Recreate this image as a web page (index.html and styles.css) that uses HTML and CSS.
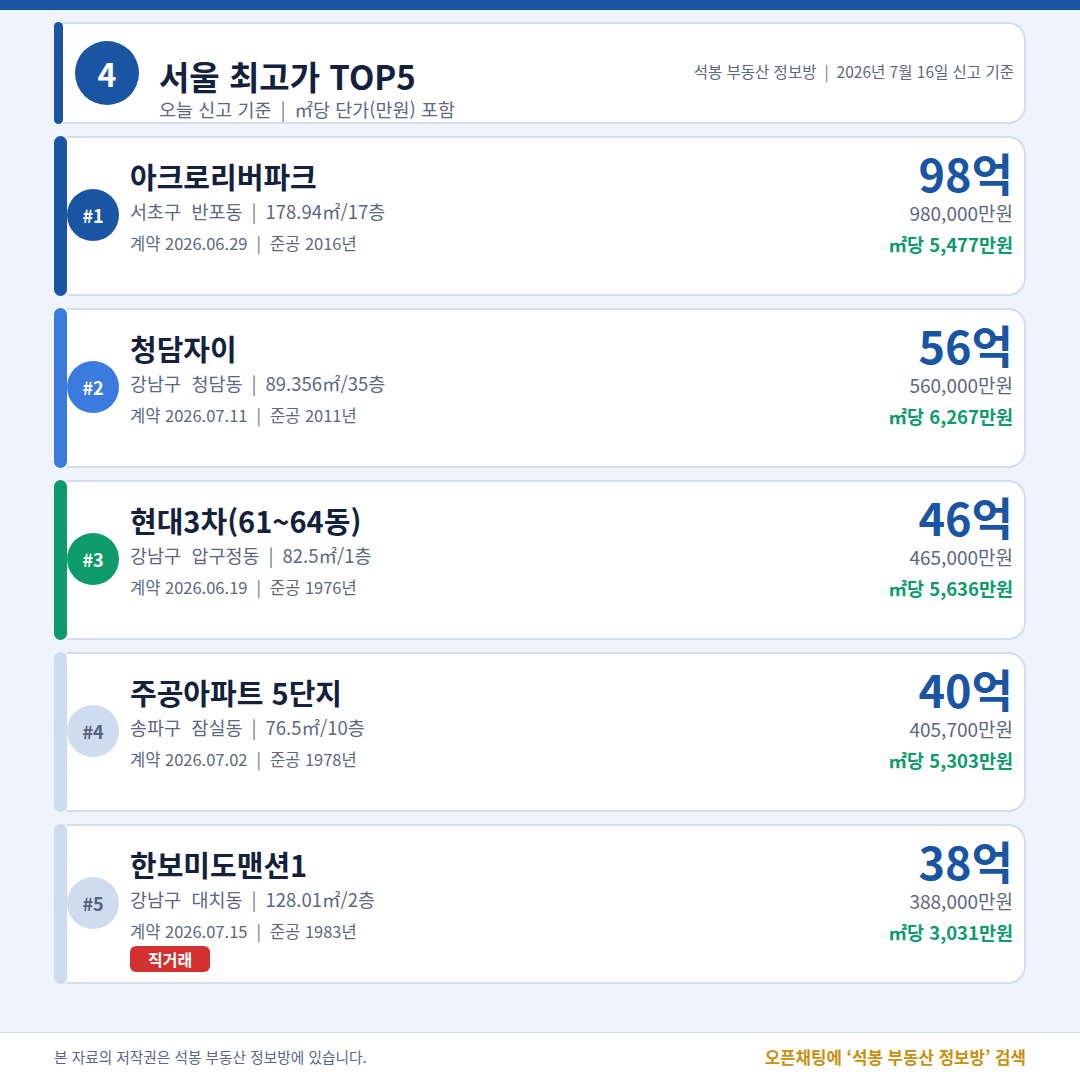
FILE: index.html
```html
<!DOCTYPE html>
<html lang="ko">

<head>
    <meta charset="UTF-8" />
    <meta name="viewport" content="width=device-width, initial-scale=1.0" />
    <title>서울 최고가 TOP5</title>
    <link rel="stylesheet" href="styles.css">
</head>

<body>
    <div class="page">
        <div class="topbar"></div>
        <main>
            <section class="head">
                <div class="bar"></div>
                <div class="head-body">
                    <div class="num">4</div>
                    <div class="head-text">
                        <h1>서울 최고가 TOP5</h1>
                        <p>오늘 신고 기준<span class="sep">|</span>㎡당 단가(만원) 포함</p>
                    </div>
                    <div class="head-info">석봉 부동산 정보방<span class="sep">|</span>2026년 7월 16일 신고 기준</div>
                </div>
            </section>

            <section class="card c1">
                <div class="bar"></div>
                <div class="card-body">
                    <div class="rank">#1</div>
                    <div class="info">
                        <h2>아크로리버파크</h2>
                        <p class="loc">서초구&nbsp; 반포동<span class="sep">|</span>178.94㎡/17층</p>
                        <p class="date">계약 2026.06.29<span class="sep">|</span>준공 2016년</p>
                    </div>
                    <div class="price">
                        <div class="big">98억</div>
                        <div class="won">980,000만원</div>
                        <div class="unit">㎡당 5,477만원</div>
                    </div>
                </div>
            </section>

            <section class="card c2">
                <div class="bar"></div>
                <div class="card-body">
                    <div class="rank">#2</div>
                    <div class="info">
                        <h2>청담자이</h2>
                        <p class="loc">강남구&nbsp; 청담동<span class="sep">|</span>89.356㎡/35층</p>
                        <p class="date">계약 2026.07.11<span class="sep">|</span>준공 2011년</p>
                    </div>
                    <div class="price">
                        <div class="big">56억</div>
                        <div class="won">560,000만원</div>
                        <div class="unit">㎡당 6,267만원</div>
                    </div>
                </div>
            </section>

            <section class="card c3">
                <div class="bar"></div>
                <div class="card-body">
                    <div class="rank">#3</div>
                    <div class="info">
                        <h2>현대3차(61~64동)</h2>
                        <p class="loc">강남구&nbsp; 압구정동<span class="sep">|</span>82.5㎡/1층</p>
                        <p class="date">계약 2026.06.19<span class="sep">|</span>준공 1976년</p>
                    </div>
                    <div class="price">
                        <div class="big">46억</div>
                        <div class="won">465,000만원</div>
                        <div class="unit">㎡당 5,636만원</div>
                    </div>
                </div>
            </section>

            <section class="card c4">
                <div class="bar"></div>
                <div class="card-body">
                    <div class="rank">#4</div>
                    <div class="info">
                        <h2>주공아파트 5단지</h2>
                        <p class="loc">송파구&nbsp; 잠실동<span class="sep">|</span>76.5㎡/10층</p>
                        <p class="date">계약 2026.07.02<span class="sep">|</span>준공 1978년</p>
                    </div>
                    <div class="price">
                        <div class="big">40억</div>
                        <div class="won">405,700만원</div>
                        <div class="unit">㎡당 5,303만원</div>
                    </div>
                </div>
            </section>

            <section class="card c4">
                <div class="bar"></div>
                <div class="card-body">
                    <div class="rank">#5</div>
                    <div class="info">
                        <h2>한보미도맨션1</h2>
                        <p class="loc">강남구&nbsp; 대치동<span class="sep">|</span>128.01㎡/2층</p>
                        <p class="date">계약 2026.07.15<span class="sep">|</span>준공 1983년</p>
                        <span class="badge">직거래</span>
                    </div>
                    <div class="price">
                        <div class="big">38억</div>
                        <div class="won">388,000만원</div>
                        <div class="unit">㎡당 3,031만원</div>
                    </div>
                </div>
            </section>
        </main>
        <footer>
            <span class="copy">본 자료의 저작권은 석봉 부동산 정보방에 있습니다.</span>
            <span class="chat">오픈채팅에 ‘석봉 부동산 정보방’ 검색</span>
        </footer>
    </div>
</body>

</html>
```

FILE: styles.css
```css
* {
    padding: 0;
    margin: 0;
    box-sizing: border-box;
}

body {
    font-family: "Noto Sans CJK KR", "Noto Sans", sans-serif;
    background-color: #eef3fc;
    color: #14213d;
}

.page {
    height: 1080px;
    display: flex;
    flex-direction: column;
}

.topbar {
    height: 10px;
    background-color: #1a55a3;
}

main {
    padding: 12px 54px 0;
    display: flex;
    flex-direction: column;
    gap: 12px;
}

.sep {
    color: #6b768e;
    margin: 0 9px;
}

/* header card */
.head {
    display: flex;
    height: 102px;
}

.head .bar {
    width: 9px;
    background-color: #1a55a3;
    border-radius: 5px;
}

.head-body {
    flex: 1;
    display: flex;
    align-items: center;
    background-color: #fff;
    border: 2px solid #d3ddef;
    border-left: none;
    border-radius: 0 18px 18px 0;
    padding: 0 10px 0 12px;
}

.num {
    width: 64px;
    height: 64px;
    border-radius: 50%;
    background-color: #1a55a3;
    color: #fff;
    font-size: 32px;
    font-weight: 700;
    display: flex;
    align-items: center;
    justify-content: center;
}

.head-text {
    margin-left: 20px;
    align-self: flex-start;
    margin-top: 33px;
}

.head-text h1 {
    font-size: 33px;
    line-height: 39px;
    font-weight: 700;
}

.head-text p {
    font-size: 18.5px;
    line-height: 26px;
    color: #5b6882;
}

.head-info {
    margin-left: auto;
    align-self: flex-start;
    margin-top: 36px;
    font-size: 15.5px;
    color: #5b6882;
}

.head-info .sep {
    margin: 0 8px;
}

/* listing cards */
.card {
    display: flex;
    height: 160px;
}

.card .bar {
    width: 13px;
    border-radius: 7px;
}

.card-body {
    flex: 1;
    display: flex;
    background-color: #fff;
    border: 2px solid #d3ddef;
    border-left: none;
    border-radius: 0 18px 18px 0;
    padding: 20px 11px 0 0;
}

.rank {
    width: 52px;
    height: 52px;
    border-radius: 50%;
    align-self: center;
    margin-top: -22px;
    color: #fff;
    font-size: 18px;
    font-weight: 700;
    display: flex;
    align-items: center;
    justify-content: center;
}

.c1 .bar,
.c1 .rank {
    background-color: #1a55a3;
}

.c2 .bar,
.c2 .rank {
    background-color: #3a7bdd;
}

.c3 .bar,
.c3 .rank {
    background-color: #0e9b6b;
}

.c4 .bar,
.c4 .rank {
    background-color: #cfdbef;
}

.c4 .rank {
    color: #56627d;
}

.info {
    margin-left: 11px;
}

.info h2 {
    font-size: 29px;
    line-height: 36px;
    font-weight: 700;
}

.loc {
    font-size: 18.5px;
    line-height: 34px;
    color: #5b6882;
}

.date {
    font-size: 16.5px;
    line-height: 30px;
    color: #5b6882;
}

.badge {
    display: inline-block;
    background-color: #d3312f;
    color: #fff;
    font-size: 16px;
    font-weight: 700;
    line-height: 26px;
    padding: 0 18px;
    border-radius: 6px;
}

.price {
    margin-left: auto;
    margin-top: -7px;
    text-align: right;
}

.big {
    font-size: 45px;
    line-height: 44px;
    font-weight: 700;
    color: #1a55a3;
}

.won {
    font-size: 19px;
    line-height: 36px;
    color: #5b6882;
}

.unit {
    font-size: 18.5px;
    line-height: 26px;
    font-weight: 700;
    color: #0e9b6b;
}

footer {
    margin-top: auto;
    height: 48px;
    background-color: #fff;
    border-top: 1px solid #d3ddef;
    display: flex;
    align-items: center;
    justify-content: space-between;
    padding: 0 54px;
}

.copy {
    font-size: 14.7px;
    color: #5b6882;
}

.chat {
    font-size: 16.8px;
    font-weight: 700;
    color: #c8900c;
}
```
